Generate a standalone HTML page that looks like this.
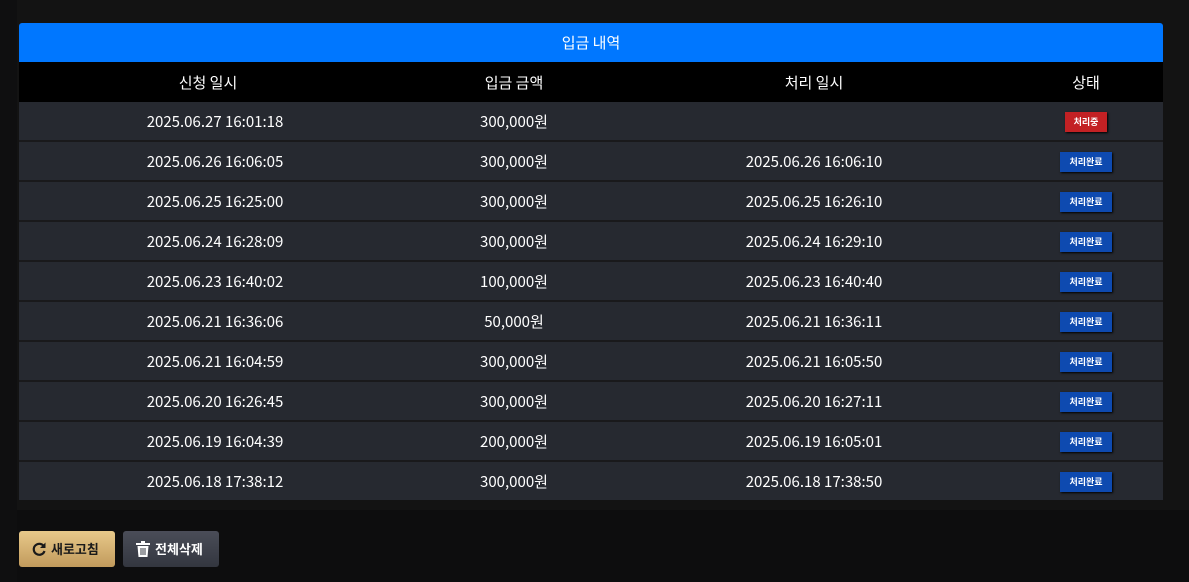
<!DOCTYPE html>
<html><head><meta charset="utf-8"><style>
body{margin:0;width:1189px;height:582px;background:#0d0d0e;font-family:"Noto Sans CJK KR","Liberation Sans",sans-serif;color:#fff;overflow:hidden;position:relative}
.top{position:absolute;left:0;top:0;width:1189px;height:510px;background:#131313}
.side{position:absolute;left:0;top:0;width:17px;height:582px;background:#0f0f10}
.wrap{position:absolute;left:19px;top:23px;width:1144px}
.title{height:39px;background:#0077ff;border-radius:3px 3px 0 0;text-align:center;line-height:39px;font-size:15px}
table{border-collapse:collapse;width:1144px;table-layout:fixed}
th{height:40px;background:#000;font-weight:normal;font-size:15px;padding:0}
td{height:37px;background:#262930;text-align:center;font-size:15px;border-bottom:2px solid #19191b;padding:0;padding-top:1px}
td:nth-child(1){padding-left:14px}
td:nth-child(4){padding-left:12px}
tr:last-child td{border-bottom:0}
.b{display:inline-block;font-size:9px;font-weight:bold;padding:0 9px;height:20px;line-height:20px;box-shadow:1px 1px 2px #000;vertical-align:middle}
.r{background:#c32124}.g{background:#0e4ab0}
.btn{position:absolute;top:531px;height:36px;border-radius:3px;font-size:13px;font-weight:bold;line-height:36px;display:flex;align-items:center;gap:4px;padding:0 12px;box-sizing:border-box}
</style></head><body>
<div class="top"></div><div class="side"></div>
<div class="wrap">
<div class="title">입금 내역</div>
<table>
<colgroup><col style="width:378px"><col style="width:234px"><col style="width:366px"><col></colgroup>
<tr><th>신청 일시</th><th>입금 금액</th><th>처리 일시</th><th style="padding-left:12px">상태</th></tr>
<tr><td>2025.06.27 16:01:18</td><td>300,000원</td><td></td><td><span class="b r">처리중</span></td></tr>
<tr><td>2025.06.26 16:06:05</td><td>300,000원</td><td>2025.06.26 16:06:10</td><td><span class="b g">처리완료</span></td></tr>
<tr><td>2025.06.25 16:25:00</td><td>300,000원</td><td>2025.06.25 16:26:10</td><td><span class="b g">처리완료</span></td></tr>
<tr><td>2025.06.24 16:28:09</td><td>300,000원</td><td>2025.06.24 16:29:10</td><td><span class="b g">처리완료</span></td></tr>
<tr><td>2025.06.23 16:40:02</td><td>100,000원</td><td>2025.06.23 16:40:40</td><td><span class="b g">처리완료</span></td></tr>
<tr><td>2025.06.21 16:36:06</td><td>50,000원</td><td>2025.06.21 16:36:11</td><td><span class="b g">처리완료</span></td></tr>
<tr><td>2025.06.21 16:04:59</td><td>300,000원</td><td>2025.06.21 16:05:50</td><td><span class="b g">처리완료</span></td></tr>
<tr><td>2025.06.20 16:26:45</td><td>300,000원</td><td>2025.06.20 16:27:11</td><td><span class="b g">처리완료</span></td></tr>
<tr><td>2025.06.19 16:04:39</td><td>200,000원</td><td>2025.06.19 16:05:01</td><td><span class="b g">처리완료</span></td></tr>
<tr><td>2025.06.18 17:38:12</td><td>300,000원</td><td>2025.06.18 17:38:50</td><td><span class="b g">처리완료</span></td></tr>
</table></div>
<div class="btn" style="left:19px;width:96px;background:linear-gradient(#e8c98a,#c19a5c);color:#1a1a1a">
<svg width="16" height="16" viewBox="0 0 16 16"><path d="M13 5.5A5.5 5.5 0 1 0 13.5 10" fill="none" stroke="#1a1a1a" stroke-width="2.2"/><path d="M14.5 1.5V7H9z" fill="#1a1a1a"/></svg>새로고침</div>
<div class="btn" style="left:123px;width:96px;background:linear-gradient(#4a4d58,#33363f);color:#fff">
<svg width="16" height="18" viewBox="0 0 16 18"><rect x="1" y="3" width="14" height="2" fill="#fff"/><rect x="6" y="1" width="4" height="2" fill="#fff"/><path d="M2.5 6h11l-1 11h-9z" fill="#fff"/><path d="M6 8v7M8 8v7M10 8v7" stroke="#3a3d46" stroke-width="1"/></svg>전체삭제</div>
</body></html>
